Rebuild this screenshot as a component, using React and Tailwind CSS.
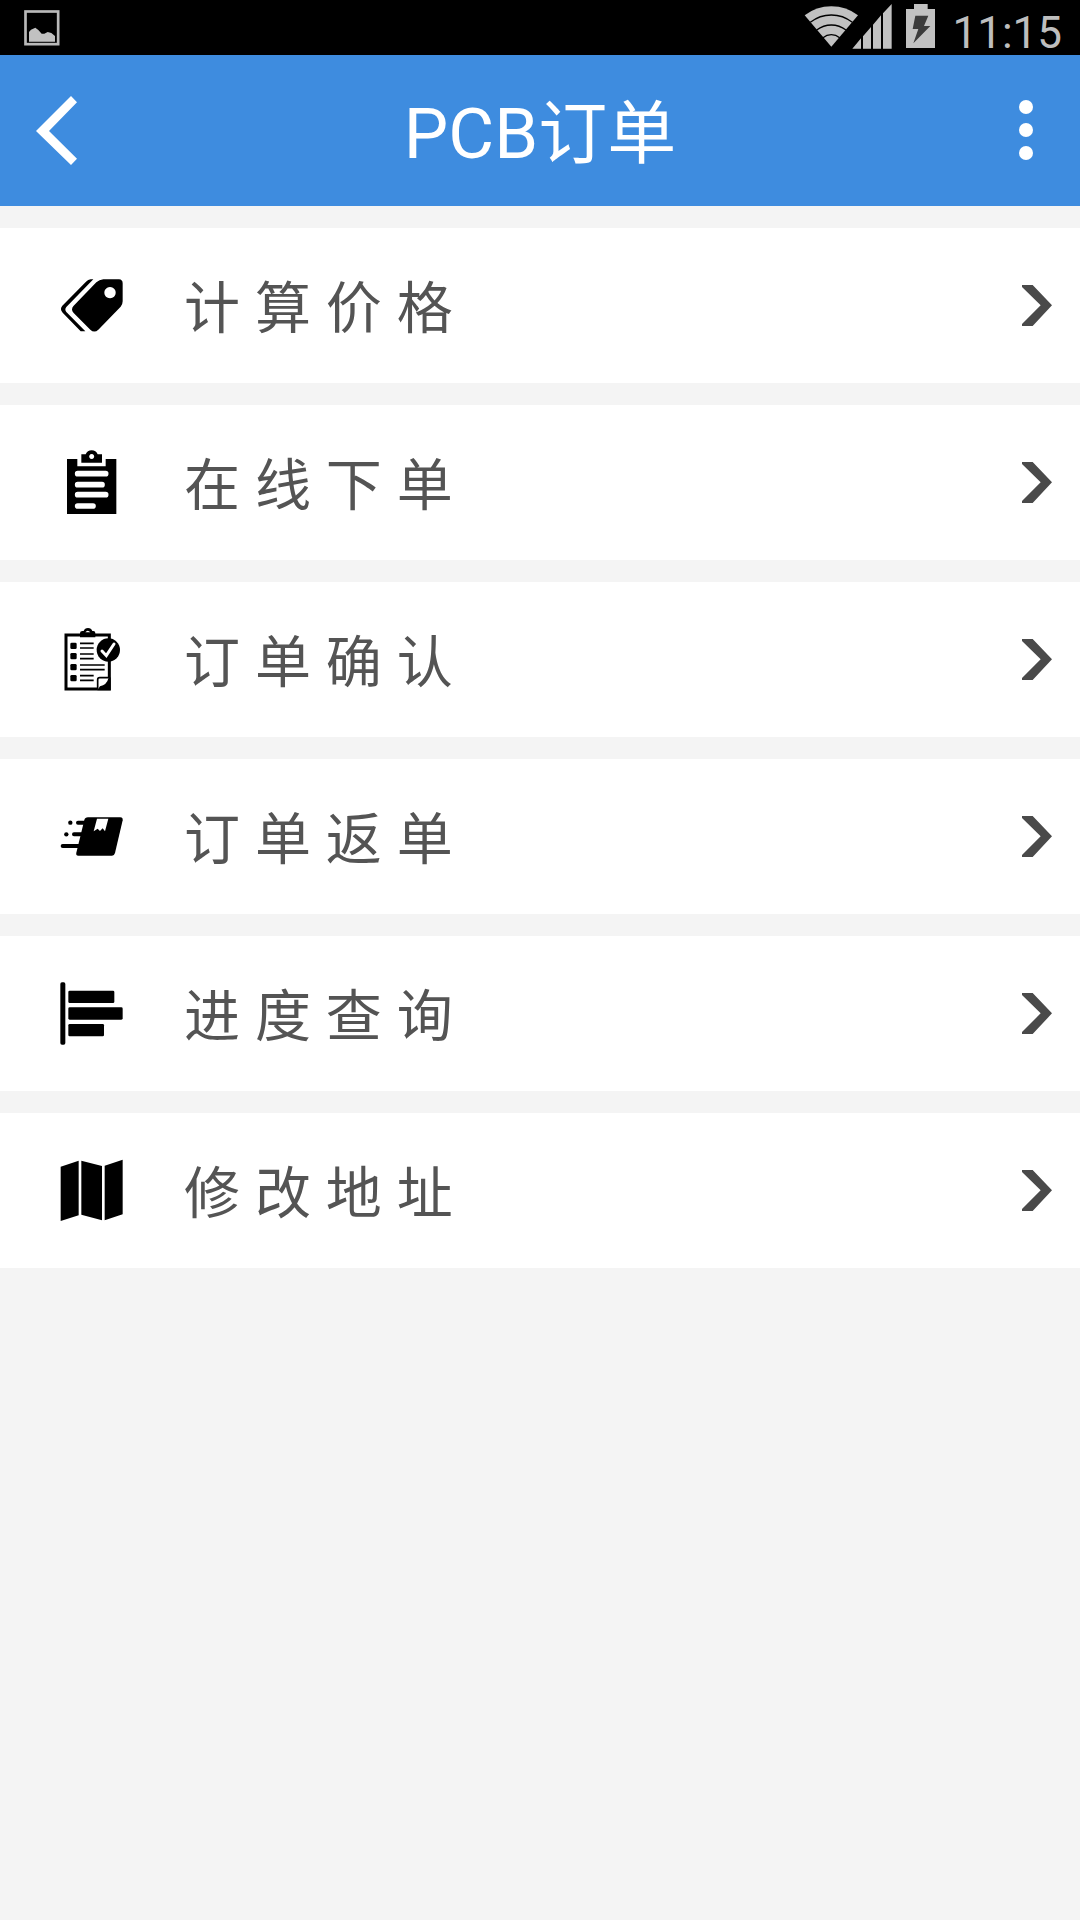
const PictureIcon = () => (
  <svg className="w-9 h-9" viewBox="0 0 108 108">
    <rect x="4.5" y="4.5" width="98" height="98" fill="none" stroke="#b9b9b9" strokeWidth="8" />
    <path d="M15 66l6-7 13-6 9 7 10 11h8l10-5 11 3 11 9v17H15z" fill="#c1c1c1" />
  </svg>
);

const StatusIcons = () => (
  <svg className="w-[132px] h-[55px]" viewBox="72 0 396 165">
    {/* wifi */}
    <path d="M154 140L74 46Q109 19 154 19T234 46z" fill="#c1c1c1" />
    <g fill="none" stroke="#000" strokeWidth="4">
      <path d="M91 67Q119 45 154 45T217 67" />
      <path d="M110 90Q130 75 154 75T198 90" />
      <path d="M129 113Q140 104 154 104T179 113" />
    </g>
    {/* signal */}
    <path d="M217 146L243 115V146zM249 109L273 81V146H249zM279 74L303 46V146H279zM309 40L335 12V146H309z" fill="#c1c1c1" />
    {/* battery */}
    <path d="M402 12h41v15h22v117h-87V27h24z" fill="#c1c1c1" />
    <path d="M406 47h39l-13 31h19l-51 52 15-43h-17z" fill="#3b3b3b" />
  </svg>
);

const Tags = () => (
  <svg className="w-16 h-[65px] shrink-0" viewBox="60 39 192 195">
    <path d="M160 58h-8q-8 1-14 7L67 137q-9 11 1 21l54 56h14L79 156q-6-8 0-15z" />
    <path
      fillRule="evenodd"
      d="M190 58h47q11 1 11 12v54q0 9-6 16l-67 69q-12 11-24 0l-50-50q-10-11 0-22l68-70q9-8 21-9zM210 81a17 17 0 1 0 .1 0z"
    />
  </svg>
);

const Clipboard = () => (
  <svg className="w-16 h-[65px] shrink-0" viewBox="60 60 192 195">
    <path d="M81 87h31v22h85V87h32v165H81z" />
    <path fillRule="evenodd" d="M124 73h13q5-12 18-12t18 12h13v25h-62zM155 72a7.500 7.500 0 1 0 .1 0z" />
    <g stroke="#fff" strokeWidth="17" strokeLinecap="round">
      <path d="M113 131h84M113 164h73M113 194h84M113 228h46" />
    </g>
  </svg>
);

const Checklist = () => (
  <svg className="w-16 h-[65px] shrink-0" viewBox="60 51 192 195">
    <rect x="78" y="75" width="130" height="162" fill="none" stroke="#000" strokeWidth="9" />
    <path d="M120 82V69q0-6 7-6h4q3-9 13-9t13 9h3q6 0 6 6v13z" />
    <path d="M136 67q7-9 15 0z" fill="#fff" />
    <g>
      <rect x="91" y="98" width="19" height="19" rx="4" />
      <rect x="91" y="129" width="19" height="19" rx="4" />
      <rect x="91" y="162" width="19" height="19" rx="4" />
      <rect x="91" y="195" width="19" height="19" rx="4" />
    </g>
    <path
      d="M120 100h41M120 114h41M120 132h41M120 146h41M120 165h74M120 179h74M120 197h41M120 211h41"
      stroke="#000"
      strokeWidth="5"
    />
    <path d="M173 238v-29q0-6 6-6h29l-33 35z" fill="#fff" />
    <path d="M173 238v-29q0-6 6-6h29" fill="none" stroke="#000" strokeWidth="5" />
    <path d="M212 202v39h-40l8-12q20-4 26-24z" />
    <circle cx="205" cy="120" r="35" />
    <path d="M186 123l13 14 23-35" fill="none" stroke="#fff" strokeWidth="9" strokeLinecap="round" />
  </svg>
);

const FastBox = () => (
  <svg className="w-16 h-[65px] shrink-0" viewBox="60 42 192 195">
    <path d="M144 82h97q8 0 7 9l-23 98q-2 8-9 8H115q-8 0-6-9l24-98q2-8 11-8z" />
    <path d="M171 86h34l-10 38-7-9-8 8-7-7-12 8z" fill="#fff" />
    <path d="M114 98h24M102 133h24M68 168h52" stroke="#000" strokeWidth="12" strokeLinecap="round" />
    <circle cx="91" cy="98" r="6.500" />
    <circle cx="79" cy="133" r="6.500" />
  </svg>
);

const Bars = () => (
  <svg className="w-16 h-[65px] shrink-0" viewBox="60 63 192 195">
    <rect x="61" y="67" width="15" height="187" rx="5" />
    <rect x="85" y="92" width="138" height="37" rx="4" />
    <rect x="85" y="142" width="163" height="37" rx="4" />
    <rect x="85" y="192" width="107" height="37" rx="4" />
  </svg>
);

const FoldedMap = () => (
  <svg className="w-16 h-[65px] shrink-0" viewBox="60 54 192 195">
    <path d="M62 80l54-18v164l-54 17zM124 62l62 16v163l-62-17zM194 77l54-18v164l-54 18z" />
  </svg>
);

const Chevron = () => (
  <svg className="w-[30px] h-[41px]" viewBox="0 0 90 123">
    <path d="M0 0h32l58 61-58 62H0v-6l56-56L0 6z" fill="#4a4a4a" />
  </svg>
);

const items = [
  { label: '计 算 价 格', icon: Tags },
  { label: '在 线 下 单', icon: Clipboard },
  { label: '订 单 确 认', icon: Checklist },
  { label: '订 单 返 单', icon: FastBox },
  { label: '进 度 查 询', icon: Bars },
  { label: '修 改 地 址', icon: FoldedMap },
];

export default function App() {
  return (
    <div className="w-[1080px] h-[1920px] bg-[#f4f4f4] font-[Roboto,'Noto_Sans_CJK_SC',sans-serif]">
      <div className="h-[55px] bg-black flex items-center justify-between pl-6 pr-[18px]">
        <PictureIcon />
        <div className="flex items-center">
          <StatusIcons />
          <span className="ml-4 pt-2.5 text-[44px] leading-none text-[#bebebe]">11:15</span>
        </div>
      </div>

      <header className="h-[151px] bg-[#3e8cdf] flex items-center justify-between pl-9 pr-[47px]">
        <button className="w-[52px]">
          <svg className="w-[41px] h-[69px]" viewBox="0 0 123 207">
            <path d="M105 0l18 19-84 86 84 83-18 19L0 105z" fill="#fff" />
          </svg>
        </button>
        <h1 className="pt-2 text-[70.500px] leading-none text-white whitespace-nowrap">
          PCB<span className="text-[69px]">订单</span>
        </h1>
        <button className="w-[41px] pb-px flex flex-col items-end gap-[9px]">
          <span className="size-3.5 rounded-full bg-white" />
          <span className="size-3.5 rounded-full bg-white" />
          <span className="size-3.5 rounded-full bg-white" />
        </button>
      </header>

      <ul className="pt-[22px] flex flex-col gap-[22px]">
        {items.map(({ label, icon: Icon }) => (
          <li key={label} className="h-[155px] bg-white flex items-center pl-[60px] pr-7">
            <Icon />
            <span className="ml-[60px] pt-[7px] flex-1 text-[56px] [word-spacing:1px] leading-none text-[#545454]">
              {label}
            </span>
            <Chevron />
          </li>
        ))}
      </ul>
    </div>
  );
}
